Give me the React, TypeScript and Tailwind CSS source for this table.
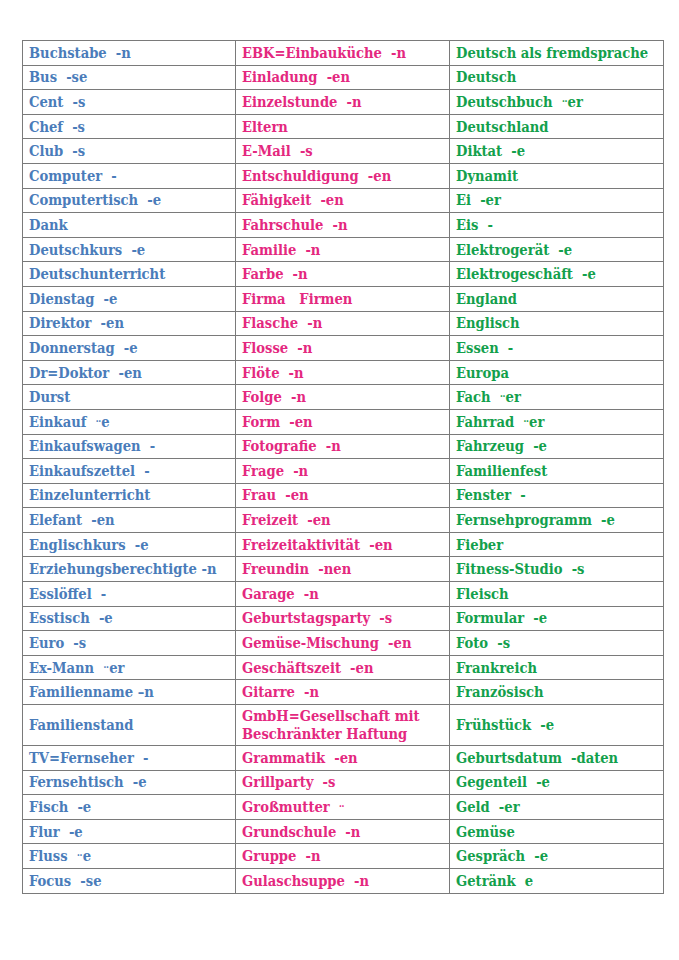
const rows: [string, string, string][] = [
  ["Buchstabe  -n", "EBK=Einbauküche  -n", "Deutsch als fremdsprache"],
  ["Bus  -se", "Einladung  -en", "Deutsch"],
  ["Cent  -s", "Einzelstunde  -n", "Deutschbuch  ¨er"],
  ["Chef  -s", "Eltern", "Deutschland"],
  ["Club  -s", "E-Mail  -s", "Diktat  -e"],
  ["Computer  -", "Entschuldigung  -en", "Dynamit"],
  ["Computertisch  -e", "Fähigkeit  -en", "Ei  -er"],
  ["Dank", "Fahrschule  -n", "Eis  -"],
  ["Deutschkurs  -e", "Familie  -n", "Elektrogerät  -e"],
  ["Deutschunterricht", "Farbe  -n", "Elektrogeschäft  -e"],
  ["Dienstag  -e", "Firma   Firmen", "England"],
  ["Direktor  -en", "Flasche  -n", "Englisch"],
  ["Donnerstag  -e", "Flosse  -n", "Essen  -"],
  ["Dr=Doktor  -en", "Flöte  -n", "Europa"],
  ["Durst", "Folge  -n", "Fach  ¨er"],
  ["Einkauf  ¨e", "Form  -en", "Fahrrad  ¨er"],
  ["Einkaufswagen  -", "Fotografie  -n", "Fahrzeug  -e"],
  ["Einkaufszettel  -", "Frage  -n", "Familienfest"],
  ["Einzelunterricht", "Frau  -en", "Fenster  -"],
  ["Elefant  -en", "Freizeit  -en", "Fernsehprogramm  -e"],
  ["Englischkurs  -e", "Freizeitaktivität  -en", "Fieber"],
  ["Erziehungsberechtigte -n", "Freundin  -nen", "Fitness-Studio  -s"],
  ["Esslöffel  -", "Garage  -n", "Fleisch"],
  ["Esstisch  -e", "Geburtstagsparty  -s", "Formular  -e"],
  ["Euro  -s", "Gemüse-Mischung  -en", "Foto  -s"],
  ["Ex-Mann  ¨er", "Geschäftszeit  -en", "Frankreich"],
  ["Familienname –n", "Gitarre  -n", "Französisch"],
  ["Familienstand", "GmbH=Gesellschaft mit\nBeschränkter Haftung", "Frühstück  -e"],
  ["TV=Fernseher  -", "Grammatik  -en", "Geburtsdatum  -daten"],
  ["Fernsehtisch  -e", "Grillparty  -s", "Gegenteil  -e"],
  ["Fisch  -e", "Großmutter  ¨", "Geld  -er"],
  ["Flur  -e", "Grundschule  -n", "Gemüse"],
  ["Fluss  ¨e", "Gruppe  -n", "Gespräch  -e"],
  ["Focus  -se", "Gulaschsuppe  -n", "Getränk  e"],
];

const colors = ["text-[#4a7cba]", "text-[#e4287f]", "text-[#13a04c]"];

// renders "¨" as a small mark like in the scan
function Word({ text }: { text: string }) {
  const parts = text.split("¨");
  return (
    <>
      {parts.map((p, i) => (
        <span key={i}>
          {i > 0 && <span className="relative top-[3px] text-[13px] leading-none">¨</span>}
          {p}
        </span>
      ))}
    </>
  );
}

export default function App() {
  return (
    <div className="min-h-[960px] w-[679px] bg-white pt-[40px] pl-[22px]">
      <table className="border-collapse w-[641px] table-fixed font-['DejaVu_Serif_Condensed','DejaVu_Serif',serif] font-bold text-[14.6px] leading-[18px] whitespace-pre">
        <colgroup>
          <col className="w-[213px]" />
          <col className="w-[214px]" />
          <col className="w-[214px]" />
        </colgroup>
        <tbody>
          {rows.map((r, i) => (
            <tr key={i} className={r[1].includes("\n") ? "h-[41px]" : "h-[24.6px]"}>
              {r.map((c, j) => (
                <td key={j} className={`border border-[#7a7a7a] px-[6px] py-0 align-middle ${colors[j]}`}>
                  {c.split("\n").map((line, k) => (
                    <div key={k}>
                      <Word text={line} />
                    </div>
                  ))}
                </td>
              ))}
            </tr>
          ))}
        </tbody>
      </table>
    </div>
  );
}
